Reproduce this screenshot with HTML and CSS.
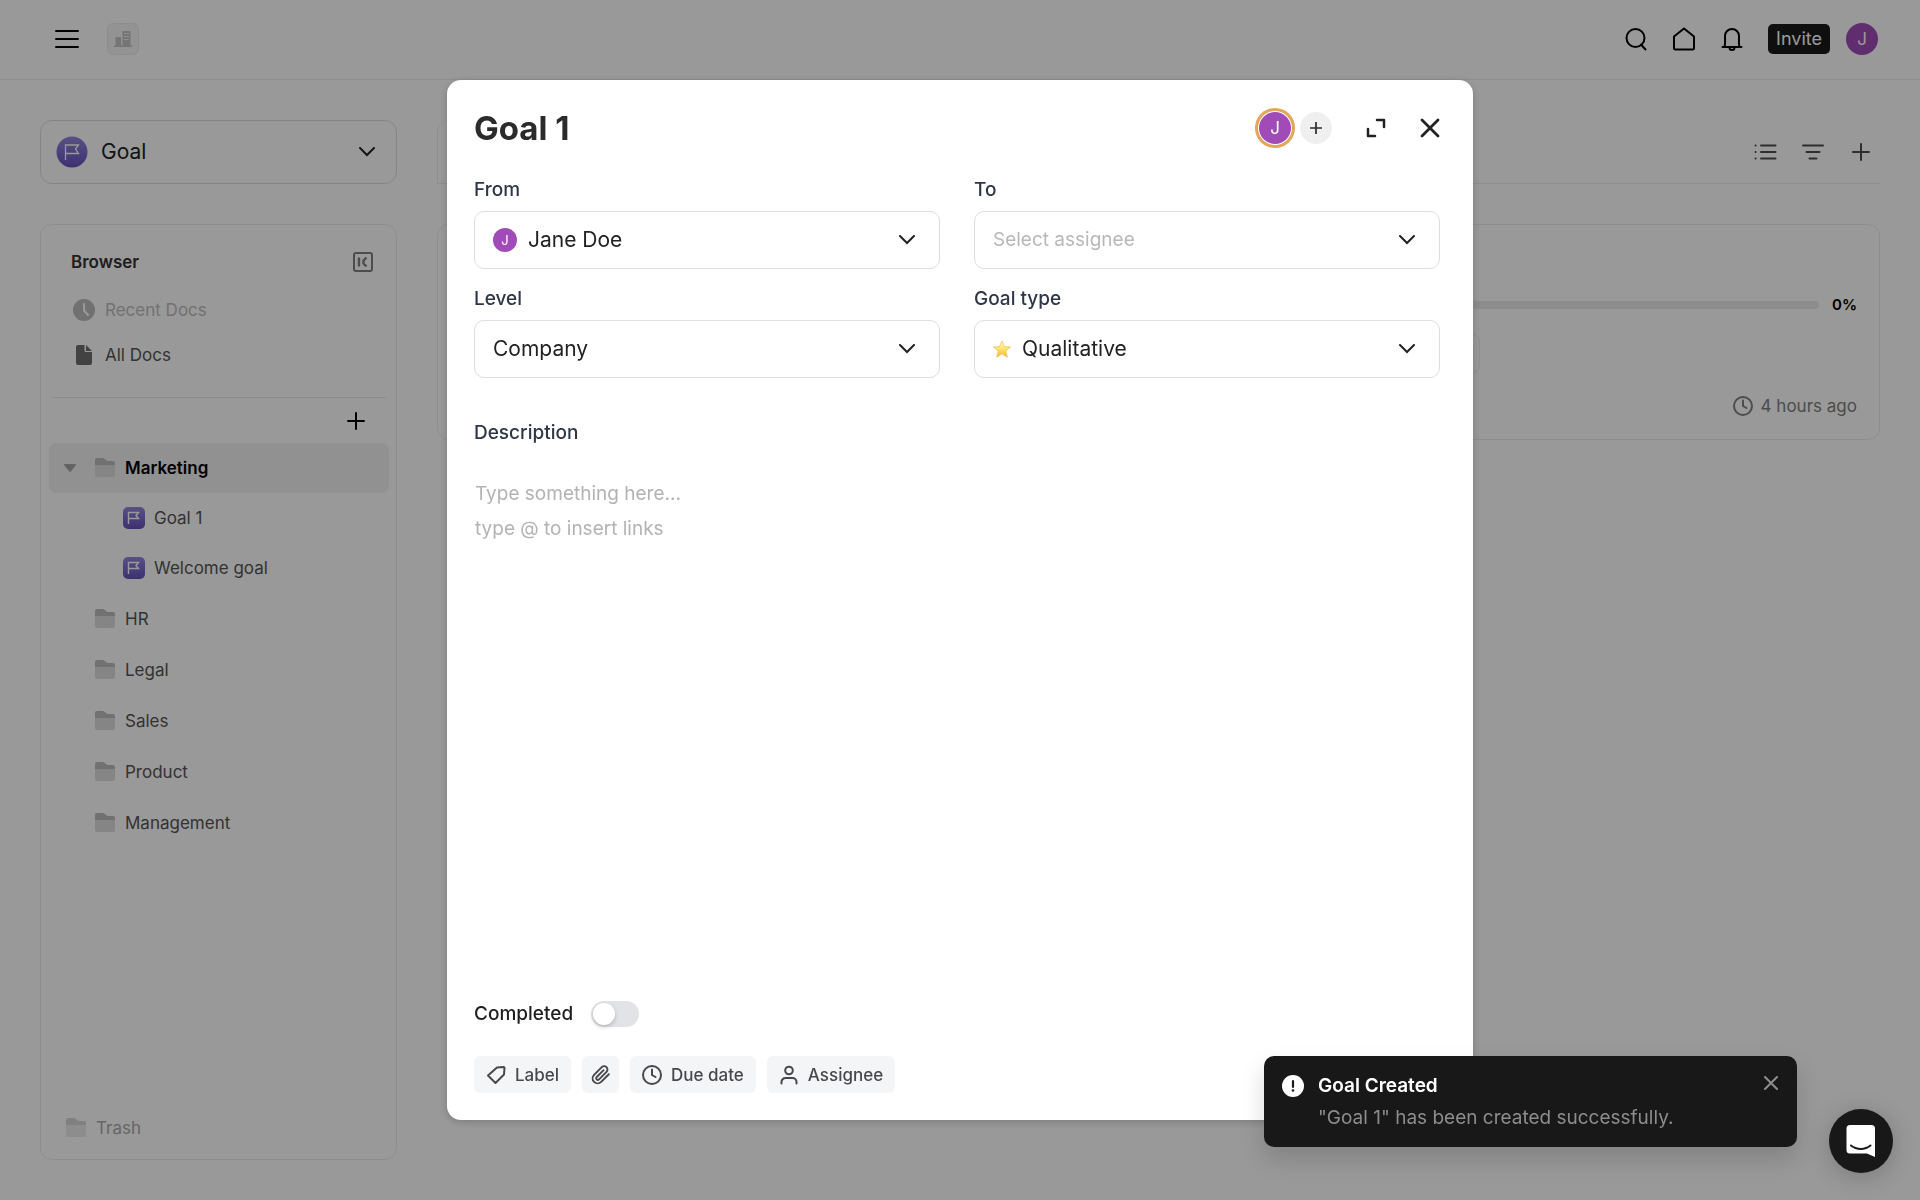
FILE: index.html
```html
<!DOCTYPE html>
<html lang="en">
<head>
<meta charset="utf-8">
<meta name="viewport" content="width=device-width, initial-scale=1">
<title>Goal 1</title>
<link rel="stylesheet" href="styles.css">
</head>
<body>
<svg class="sprite" aria-hidden="true">
  <defs>
    <linearGradient id="flag-fill" x1="0" y1="0" x2="0" y2="1">
      <stop offset="0" stop-color="#9387dd"/>
      <stop offset="1" stop-color="#6651bd"/>
    </linearGradient>
    <linearGradient id="star-fill" x1="0" y1="0" x2="0" y2="1">
      <stop offset="0" stop-color="#fffbe0"/>
      <stop offset="0.5" stop-color="#fde36a"/>
      <stop offset="1" stop-color="#f6b62c"/>
    </linearGradient>
    <symbol id="chevron" viewBox="0 0 16 10"><path d="M1 1l7 7 7-7" fill="none" stroke="currentColor" stroke-width="2" stroke-linecap="round"/></symbol>
    <symbol id="folder" viewBox="0 0 20 20"><path d="M0 8V2a2 2 0 0 1 2-2h5.500q1.500 0 2.500 1.200T13 3h5a2 2 0 0 1 2 2v3z" fill="#bcbcbc"/><path d="M0 7h20v10a2 2 0 0 1-2 2H2a2 2 0 0 1-2-2z" fill="#dedede"/></symbol>
    <symbol id="goal-badge" viewBox="0 0 22 22"><rect width="22" height="22" rx="5" fill="url(#flag-fill)"/><path d="M5.500 17V5.500h10l-2.500 3 2.500 3h-10" fill="none" stroke="#fff" stroke-width="1.400"/></symbol>
    <symbol id="clock" viewBox="0 0 20 20"><circle cx="10" cy="10" r="9" fill="none" stroke="currentColor" stroke-width="2"/><path d="M10 4.500V10l3.500 2" fill="none" stroke="currentColor" stroke-width="2" stroke-linecap="round"/></symbol>
  </defs>
</svg>

<div class="page">
  <header class="topbar">
    <button class="icon-btn" aria-label="Menu"><svg width="24" height="20" viewBox="0 0 24 20"><path d="M1 2h22M1 10h22M1 18h22" stroke="#000" stroke-width="2" stroke-linecap="round"/></svg></button>
    <button class="org-btn" aria-label="Organization"><svg width="18" height="16" viewBox="0 0 18 16"><path d="M0 14.500h18V16H0zM1.500 6h5.500v8.500H1.500zM8.500 0h8v14.500h-8z" fill="#c4c4c4"/><path d="M10 2.500h5M10 5.500h5M10 8.500h5" stroke="#ececec" stroke-width="1"/></svg></button>
    <div class="topbar-actions">
      <button class="icon-btn" aria-label="Search"><svg width="24" height="24" viewBox="0 0 24 24" fill="none" stroke="#000" stroke-width="2"><circle cx="11.500" cy="11" r="9"/><path d="M17 17.500l4.500 5" stroke-linecap="round"/></svg></button>
      <button class="icon-btn" aria-label="Home"><svg width="24" height="24" viewBox="0 0 24 24" fill="none" stroke="#000" stroke-width="2" stroke-linejoin="round"><path d="M2 9.500L12 1.500 22 9.500V21a1.500 1.500 0 0 1-1.500 1.500h-17A1.500 1.500 0 0 1 2 21z"/></svg></button>
      <button class="icon-btn" aria-label="Notifications"><svg width="24" height="24" viewBox="0 0 24 24" fill="none" stroke="#000" stroke-width="2" stroke-linecap="round" stroke-linejoin="round"><path d="M2.500 20h19M4.500 20c1-3 .5-6 .5-11a7 7 0 0 1 14 0c0 5-.5 8 .5 11M9.500 20.500a2.500 2.500 0 0 0 5 0"/></svg></button>
      <button class="invite">Invite</button>
      <button class="avatar" aria-label="Account">J</button>
    </div>
  </header>

  <div class="workspace">
    <label class="picker app-picker">
      <svg width="32" height="32" viewBox="0 0 32 32"><circle cx="16" cy="16" r="15.500" fill="url(#flag-fill)"/><path d="M9.500 24V9h13l-3 4 3 4.500h-13" fill="none" stroke="#fff" stroke-width="1.300"/></svg>
      <select aria-label="Section"><option>Goal</option></select>
      <svg width="16" height="10"><use href="#chevron"/></svg>
    </label>

    <div class="toolbar">
      <button class="icon-btn" aria-label="List view"><svg width="24" height="24" viewBox="0 0 24 24" stroke="#4d4d4d" stroke-width="2" stroke-linecap="round"><path d="M8 5.500h14.500M8 12h14.500M8 18.500h14.500M2.500 5.500h.1M2.500 12h.1M2.500 18.500h.1"/></svg></button>
      <button class="icon-btn" aria-label="Filter"><svg width="24" height="24" viewBox="0 0 24 24" stroke="#4d4d4d" stroke-width="2" stroke-linecap="round"><path d="M2 5.500h20M5.500 12h13M8.500 18.500h7"/></svg></button>
      <button class="icon-btn" aria-label="Add"><svg width="24" height="24" viewBox="0 0 24 24" stroke="#4d4d4d" stroke-width="2" stroke-linecap="round"><path d="M12 4v16M4 12h16"/></svg></button>
    </div>

    <aside class="sidebar">
      <div class="sidebar-head">
        <h2>Browser</h2>
        <button class="icon-btn" aria-label="Collapse"><svg width="20" height="20" viewBox="0 0 20 20" fill="none" stroke="#808080" stroke-width="2"><rect x="1" y="1" width="18" height="18" rx="2"/><path d="M6 5.500v9M13.500 5.500L10.500 8.500v3l3 3" stroke-width="2.400"/></svg></button>
      </div>
      <nav class="docs">
        <a class="doc-link muted" href="#recent"><svg width="24" height="24" viewBox="0 0 24 24"><circle cx="12" cy="12" r="11" fill="#bcbcbc"/><path d="M12 6v6.500l4 4.500" fill="none" stroke="#fff" stroke-width="2" stroke-linecap="round"/></svg>Recent Docs</a>
        <a class="doc-link" href="#all"><svg width="24" height="24" viewBox="0 0 24 24"><path d="M4 4a2 2 0 0 1 2-2h6.500v5.500A1.500 1.500 0 0 0 14 9h6v11a2 2 0 0 1-2 2H6a2 2 0 0 1-2-2zM14 2l6 6h-6z" fill="#6e6e6e"/></svg>All Docs</a>
      </nav>
      <div class="tree-tools">
        <button class="icon-btn" aria-label="New folder"><svg width="24" height="24" viewBox="0 0 24 24" stroke="#000" stroke-width="2" stroke-linecap="round"><path d="M12 4v16M4 12h16"/></svg></button>
      </div>
      <nav class="tree">
        <a class="tree-row selected" href="#marketing"><svg class="caret" width="12" height="8" viewBox="0 0 12 8"><path d="M1 0h10a1 1 0 0 1 .7 1.500L7 7.300a1.300 1.300 0 0 1-2 0L.3 1.500A1 1 0 0 1 1 0z" fill="#a6a6a6"/></svg><svg width="20" height="20"><use href="#folder"/></svg>Marketing</a>
        <a class="tree-row child" href="#goal-1"><svg width="22" height="22"><use href="#goal-badge"/></svg>Goal 1</a>
        <a class="tree-row child" href="#welcome"><svg width="22" height="22"><use href="#goal-badge"/></svg>Welcome goal</a>
        <a class="tree-row" href="#hr"><svg width="20" height="20"><use href="#folder"/></svg>HR</a>
        <a class="tree-row" href="#legal"><svg width="20" height="20"><use href="#folder"/></svg>Legal</a>
        <a class="tree-row" href="#sales"><svg width="20" height="20"><use href="#folder"/></svg>Sales</a>
        <a class="tree-row" href="#product"><svg width="20" height="20"><use href="#folder"/></svg>Product</a>
        <a class="tree-row" href="#management"><svg width="20" height="20"><use href="#folder"/></svg>Management</a>
      </nav>
      <a class="trash" href="#trash"><svg width="20" height="20"><use href="#folder"/></svg>Trash</a>
    </aside>

    <main class="board">
      <article class="goal-card">
        <div class="progress"><div class="progress-track"></div><span>0%</span></div>
        <div class="chip"></div>
        <div class="updated"><svg width="20" height="20"><use href="#clock"/></svg>4 hours ago</div>
      </article>
    </main>
  </div>
</div>

<div class="overlay">
  <section class="modal" role="dialog" aria-labelledby="modal-title">
    <header class="modal-head">
      <h1 id="modal-title">Goal 1</h1>
      <button class="avatar ringed" aria-label="Owner">J</button>
      <button class="add-member" aria-label="Add member"><svg width="12" height="12" viewBox="0 0 12 12"><path d="M6 0v12M0 6h12" stroke="#2b2b2b" stroke-width="1.700"/></svg></button>
      <button class="icon-btn expand" aria-label="Expand"><svg width="20" height="20" viewBox="0 0 20 20" fill="none" stroke="#222" stroke-width="2.500" stroke-linecap="round" stroke-linejoin="round"><path d="M11 2h7v7M2 11v7h7"/></svg></button>
      <button class="icon-btn close" aria-label="Close"><svg width="20" height="20" viewBox="0 0 20 20"><path d="M2 2l16 16M18 2L2 18" stroke="#222" stroke-width="2.800" stroke-linecap="round"/></svg></button>
    </header>

    <div class="fields">
      <div class="field">
        <label for="from">From</label>
        <div class="picker"><span class="avatar small">J</span><select id="from"><option>Jane Doe</option></select><svg width="16" height="10"><use href="#chevron"/></svg></div>
      </div>
      <div class="field">
        <label for="to">To</label>
        <div class="picker"><select id="to" class="empty"><option>Select assignee</option></select><svg width="16" height="10"><use href="#chevron"/></svg></div>
      </div>
      <div class="field">
        <label for="level">Level</label>
        <div class="picker"><select id="level"><option>Company</option></select><svg width="16" height="10"><use href="#chevron"/></svg></div>
      </div>
      <div class="field">
        <label for="type">Goal type</label>
        <div class="picker"><svg width="18" height="18" viewBox="0 0 18 18"><path d="M9 .8l2.400 5.700 6.100.5-4.700 4 1.500 6.200L9 13.800l-5.300 3.400L5.200 11 .5 7l6.100-.5z" fill="url(#star-fill)" stroke="#f0bd4c" stroke-width=".7" stroke-linejoin="round"/></svg><select id="type"><option>Qualitative</option></select><svg width="16" height="10"><use href="#chevron"/></svg></div>
      </div>
    </div>

    <div class="description">
      <label for="description">Description</label>
      <textarea id="description" placeholder="Type something here...&#10;type @ to insert links"></textarea>
    </div>

    <div class="completed">
      <label for="completed">Completed</label>
      <input type="checkbox" id="completed" class="switch">
    </div>

    <div class="modal-actions">
      <button class="action"><svg width="20" height="20" viewBox="0 0 20 20" fill="none" stroke="currentColor" stroke-width="2" stroke-linejoin="round"><path d="M11 2.500l6.500-.5c.5 0 1 .5 1 1l-.5 6.500-8.500 8.500L2 10.500z"/></svg>Label</button>
      <button class="action square" aria-label="Attach"><svg width="20" height="20" viewBox="0 0 24 24" fill="none" stroke="currentColor" stroke-width="2.300" stroke-linecap="round" stroke-linejoin="round"><path d="M21.400 11.100l-9.200 9.200a6 6 0 0 1-8.500-8.500l9.200-9.200a4 4 0 0 1 5.700 5.700l-9.200 9.200a2 2 0 0 1-2.800-2.800l8.500-8.500"/></svg></button>
      <button class="action"><svg width="20" height="20"><use href="#clock"/></svg>Due date</button>
      <button class="action"><svg width="20" height="20" viewBox="0 0 20 20" fill="none" stroke="currentColor" stroke-width="2" stroke-linecap="round"><circle cx="10" cy="5.500" r="3.800"/><path d="M2.500 18.500v-1.500a4 4 0 0 1 4-4h7a4 4 0 0 1 4 4v1.500"/></svg>Assignee</button>
    </div>
  </section>
</div>

<div class="toast" role="status">
  <svg width="22" height="22" viewBox="0 0 22 22"><circle cx="11" cy="11" r="11" fill="#fff"/><path d="M11 6v6" stroke="#1a1a1a" stroke-width="2.200" stroke-linecap="round"/><circle cx="11" cy="15.500" r="1.300" fill="#1a1a1a"/></svg>
  <div class="toast-text">
    <strong>Goal Created</strong>
    <p>"Goal 1" has been created successfully.</p>
  </div>
  <button class="icon-btn" aria-label="Dismiss"><svg width="14" height="14" viewBox="0 0 14 14"><path d="M1 1l12 12M13 1L1 13" stroke="#8e8e8e" stroke-width="2" stroke-linecap="round"/></svg></button>
</div>

<button class="chat" aria-label="Open chat"><svg width="30" height="34" viewBox="0 0 30 34"><path d="M4 1h21.500A3.500 3.500 0 0 1 29 4.500V33l-8-3.500H4A3.500 3.500 0 0 1 .5 26V4.500A3.500 3.500 0 0 1 4 1z" fill="#fff"/><path d="M5 21.500c5.500 4.500 14 4.500 19.500 0" fill="none" stroke="#1a1a1a" stroke-width="2" stroke-linecap="round"/></svg></button>
</body>
</html>
```
FILE: styles.css
```css
* { box-sizing: border-box; }

body {
  margin: 0;
  background: #fff;
  color: #222;
  font-family: Inter, "Liberation Sans", sans-serif;
  font-size: 17px;
  line-height: 28px;
}

h1, h2, p { margin: 0; }
a { color: inherit; text-decoration: none; }
button, select, textarea { font: inherit; color: inherit; }
button { border: 0; padding: 0; background: none; cursor: pointer; }
svg { display: block; flex: none; }
.sprite { position: absolute; width: 0; height: 0; }

.icon-btn { display: flex; align-items: center; justify-content: center; }

.avatar {
  flex: none;
  display: flex;
  align-items: center;
  justify-content: center;
  width: 32px;
  height: 32px;
  border-radius: 50%;
  background: #a14bb8;
  color: #fff;
}
.avatar.small { width: 24px; height: 24px; font-size: 13px; }
.avatar.ringed { box-shadow: 0 0 0 1px #fff, 0 0 0 4px #e3a557; }

/* Page */
.page { display: flex; flex-direction: column; min-height: 100vh; }

.topbar {
  display: flex;
  align-items: center;
  gap: 28px;
  height: 80px;
  padding: 0 42px 1px 55px;
  border-bottom: 1px solid #ededed;
}
.org-btn {
  display: flex;
  align-items: center;
  justify-content: center;
  width: 32px;
  height: 32px;
  border: 1px solid #ececec;
  border-radius: 6px;
  background: #f5f5f5;
}
.topbar-actions { display: flex; align-items: center; gap: 24px; margin-left: auto; }
.invite {
  height: 30px;
  margin-right: -8px;
  padding: 0 8px;
  border-radius: 5px;
  background: #1a1a1a;
  color: #fff;
  font-size: 18px;
}

.workspace {
  flex: 1;
  display: grid;
  grid-template-columns: 357px 1fr;
  grid-template-rows: auto 1fr;
  gap: 40px;
  padding: 40px;
}

.picker {
  display: flex;
  align-items: center;
  height: 58px;
  padding: 0 24px 0 18px;
  border: 1px solid #dedede;
  border-radius: 10px;
  background: #fff;
}
.picker select {
  flex: 1;
  min-width: 0;
  height: 100%;
  padding: 0;
  border: 0;
  outline: 0;
  appearance: none;
  background: none;
  font-size: 21px;
}
.picker select.empty { color: #b8b8b8; font-size: 19px; }
.picker > :first-child:not(select) { margin-right: 11px; }

.app-picker { height: 64px; padding: 0 21px 0 15px; border-radius: 12px; }
.app-picker select { font-size: 21px; }
.app-picker > :first-child:not(select) { margin-right: 13px; }

.toolbar {
  display: flex;
  align-items: center;
  justify-content: flex-end;
  gap: 24px;
  padding: 0 7px;
  border: 1px solid #ededed;
  border-width: 0 0 1px 1px;
  border-top-left-radius: 12px;
}

.sidebar {
  display: flex;
  flex-direction: column;
  padding: 23px 7px 17px 8px;
  border: 1px solid #ececec;
  border-radius: 12px;
}
.sidebar-head { display: flex; align-items: center; justify-content: space-between; padding: 0 16px 0 22px; }
.sidebar-head h2 { font-size: 17px; font-weight: 600; color: #333; }
.docs { margin: 0 3px; padding: 11px 20px 20px; border-bottom: 1px solid #e6e6e6; }
.doc-link { display: flex; align-items: center; gap: 9px; height: 45px; color: #555; }
.doc-link.muted { color: #bdbdbd; }
.tree-tools { display: flex; justify-content: flex-end; padding: 11px 21px 10px; }
.tree-row {
  display: flex;
  align-items: center;
  gap: 10px;
  height: 51px;
  padding-left: 46px;
  border-radius: 8px;
  color: #555;
}
.tree-row.child { gap: 9px; height: 50px; padding-left: 74px; }
.tree-row.selected { height: 50px; padding-left: 15px; background: #f2f2f2; color: #000; font-weight: 600; }
.caret { margin-right: 9px; }
.trash { display: flex; align-items: center; gap: 10px; margin-top: auto; padding-left: 17px; color: #aaa; }
.trash svg { opacity: 0.6; }

.goal-card {
  display: flex;
  flex-direction: column;
  padding: 66px 22px 19px;
  border: 1px solid #ececec;
  border-radius: 12px;
}
.progress { display: flex; align-items: center; gap: 13px; font-size: 15px; font-weight: 600; color: #000; }
.progress-track { flex: 1; height: 8px; border-radius: 0 4px 4px 0; background: #ebebeb; }
.chip { width: 73%; height: 39px; margin: 15px 0 19px; border: 1px solid #ececec; border-radius: 8px; }
.updated { display: flex; align-items: center; justify-content: flex-end; gap: 8px; color: #808080; }

/* Goal dialog */
.overlay {
  position: fixed;
  inset: 0;
  display: flex;
  justify-content: center;
  padding: 80px 40px;
  background: rgba(0, 0, 0, 0.4);
}
.modal {
  display: flex;
  flex-direction: column;
  width: 100%;
  max-width: 1026px;
  padding: 27px 33px 27px 27px;
  border-radius: 14px;
  background: #fff;
  box-shadow: 0 2px 8px rgba(0, 0, 0, 0.2);
}
.modal-head { display: flex; align-items: center; height: 42px; }
.modal-head h1 { flex: 1; font-size: 33px; font-weight: 700; color: #2b2b2b; }
.add-member {
  display: flex;
  align-items: center;
  justify-content: center;
  width: 32px;
  height: 32px;
  margin-left: 9px;
  border-radius: 50%;
  background: #efefef;
}
.expand { margin-left: 34px; }
.close { margin-left: 34px; }

.fields {
  display: grid;
  grid-template-columns: 1fr 1fr;
  gap: 16px 34px;
  margin-top: 27px;
}
.field label, .description label { display: block; font-size: 19px; font-weight: 500; color: #2d3748; }
.field label { margin-bottom: 7px; }

.description { flex: 1; display: flex; flex-direction: column; margin-top: 41px; }
.description textarea {
  flex: 1;
  margin-top: 29px;
  padding: 0 1px;
  border: 0;
  outline: 0;
  resize: none;
  font-size: 19px;
  line-height: 35px;
}
.description textarea::placeholder { color: #b3b3b3; }

.completed { display: flex; align-items: center; gap: 18px; font-size: 19px; font-weight: 500; color: #1f1f1f; }
.switch {
  appearance: none;
  display: flex;
  align-items: center;
  width: 48px;
  height: 26px;
  margin: 0;
  padding: 2px;
  border-radius: 13px;
  background: #e2e3e6;
}
.switch::before {
  content: "";
  width: 22px;
  height: 22px;
  border-radius: 50%;
  background: #fff;
  box-shadow: 0 2px 4px rgba(0, 0, 0, 0.2);
}
.switch:checked { justify-content: flex-end; background: #a14bb8; }

.modal-actions { display: flex; gap: 11px; margin-top: 28px; }
.action {
  display: flex;
  align-items: center;
  gap: 9px;
  height: 37px;
  padding: 0 12px;
  border-radius: 6px;
  background: #f4f5f6;
  color: #48484c;
  font-weight: 500;
}
.action.square { justify-content: center; width: 37px; padding: 0; }

/* Floating elements */
.toast {
  position: fixed;
  right: 123px;
  bottom: 53px;
  display: flex;
  align-items: flex-start;
  gap: 14px;
  width: 533px;
  padding: 16px 19px 15px 18px;
  border-radius: 10px;
  background: #181818;
  box-shadow: 0 12px 24px rgba(0, 0, 0, 0.15);
  font-size: 19px;
}
.toast > svg { margin-top: 3px; }
.toast-text { flex: 1; }
.toast strong { display: block; font-weight: 600; color: #fff; }
.toast p { margin-top: 4px; color: #8c8c8c; }
.toast .icon-btn { margin-top: 4px; }

.chat {
  position: fixed;
  right: 27px;
  bottom: 27px;
  display: flex;
  align-items: center;
  justify-content: center;
  width: 64px;
  height: 64px;
  border-radius: 50%;
  background: #181818;
  box-shadow: 0 4px 24px rgba(0, 0, 0, 0.2);
}
```
